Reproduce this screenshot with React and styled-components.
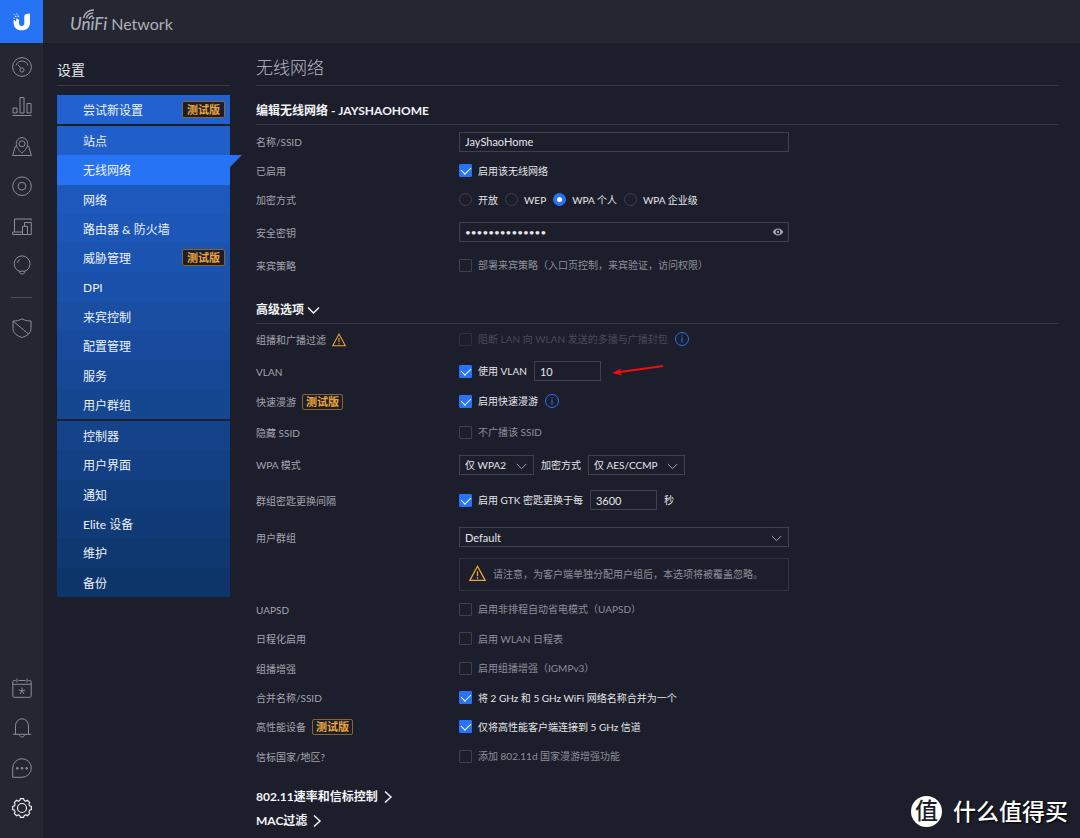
import React, { useState } from "react";
import styled, { createGlobalStyle, css } from "styled-components";

const color = {
  page: "#1c1e2b",
  bar: "#242631",
  rail: "#242632",
  line: "#363944",
  field: "#3e424c",
  blue: "#2673f6",
  amber: "#eda63a",
  text: "#e4e5e9",
  label: "#a3a5ad",
  muted: "#8d8f98",
};

const GlobalStyle = createGlobalStyle`
  * { box-sizing: border-box; }
  body {
    margin: 0;
    background: ${color.page};
    color: ${color.text};
    font-family: Lato, "Noto Sans CJK SC", sans-serif;
    font-size: 10px;
  }
  button, input, select { font-family: inherit; color: inherit; }
`;

const Page = styled.div`
  position: relative;
  display: flex;
  min-height: 100vh;
`;

/* ---------- left rail ---------- */

const Rail = styled.nav`
  display: flex;
  flex-direction: column;
  flex: none;
  width: 43px;
  padding-bottom: 10px;
  background: ${color.rail};
`;

const LogoLink = styled.a`
  display: grid;
  place-items: center;
  height: 43px;
  margin-bottom: 4px;
  background: ${color.blue};
`;

const RailButton = styled.button`
  display: grid;
  place-items: center;
  height: 40px;
  padding: 0;
  border: 0;
  background: none;
  color: ${(p) => (p.$active ? "#eceef2" : "#8b8e9a")};
`;

const RailDivider = styled.hr`
  width: 21px;
  height: 1px;
  margin: 10px auto;
  border: 0;
  background: #4d505c;
`;

const Spacer = styled.div`
  flex: 1;
`;

const Svg = styled.svg`
  display: block;
  flex: none;
  overflow: visible;
  fill: none;
  stroke: currentColor;
`;

const Icon20 = ({ children }) => (
  <Svg width="20" height="20" viewBox="0 0 20 20" strokeWidth="1" aria-hidden="true">
    {children}
  </Svg>
);

const GaugeIcon = () => (
  <Icon20>
    <circle cx="10" cy="10" r="9.4" />
    <path d="M4 8.4C5.3 5.4 7.3 4 10 4s4.700 1.400 6 4.400" />
    <circle cx="10" cy="13" r="2.100" />
    <path d="M8.700 11.200 6 7.700" />
  </Icon20>
);
const StatsIcon = () => (
  <Icon20>
    <path d="M.5 18.500h19M1 16v-5h4v5zM8 16V.5h4V16zM15 16V6.500h4V16z" />
  </Icon20>
);
const MapIcon = () => (
  <Icon20>
    <path d="M10 16.200C6 12.500 4.300 10 4.300 6.500a5.700 5.900 0 0 1 11.400 0c0 3.500-1.700 6-5.700 9.700z" />
    <circle cx="10" cy="6.800" r="3" />
    <path d="M4.600 9 3.200 9.500.7 18.500h18.600L16.800 9.500 15.400 9" />
  </Icon20>
);
const DeviceIcon = () => (
  <Icon20>
    <circle cx="10" cy="9.200" r="9.300" />
    <circle cx="10" cy="9.200" r="3.900" />
  </Icon20>
);
const ClientsIcon = () => (
  <Icon20>
    <path d="M19.200 3.500V2H2.500v13M10.500 15H.7v2.500h9.800M10.500 17.500V9.300h5v8.200zM12.500 9V5.500h6.800v12h-3.800" />
  </Icon20>
);
const BulbIcon = () => (
  <Icon20>
    <path d="M7.300 14.200C4 13 2.200 10 2.200 6.800a7.900 7.900 0 0 1 15.800 0c0 3.200-1.800 6.200-5.100 7.400M7.300 14.200h5.600v1.300l-1.400 1.300H8.700l-1.400-1.300zM5.300 5.700A5 5 0 0 1 8.200 2.400" />
  </Icon20>
);
const ShieldIcon = () => (
  <Icon20>
    <path d="M10 .8c2.800 1.700 5.700 2.200 9 2.200v7.500c0 4.500-4 7.500-9 9-5-1.500-9-4.500-9-9V3c3.300 0 6.200-.5 9-2.200zM1.500 3.500 16.500 16" />
  </Icon20>
);
const CalendarIcon = () => (
  <Icon20>
    <path d="M3.800 2.500H2.200C1.300 2.500.8 3 .8 3.800v14c0 .9.500 1.500 1.400 1.500h15.600c.9 0 1.400-.6 1.400-1.500v-14c0-.8-.5-1.300-1.400-1.300h-1.600M6.500 2.500h7M.8 6.300h18.400M5 .5v4M15 .5v4" />
    <path d="M10 9.500V13M6.700 12l3.300 1 3.300-1M8 16l2-3 2 3" />
  </Icon20>
);
const BellIcon = () => (
  <Icon20>
    <path d="M.9 16.300h18.200M3.500 16V7.800a6.500 7 0 0 1 13 0V16M7.500 17c.5 2.700 4.500 2.700 5 0" />
  </Icon20>
);
const ChatIcon = () => (
  <Icon20>
    <path d="M.7 19.300V10A9.300 9.300 0 1 1 10 19.300z" />
    <g fill="currentColor" stroke="none">
      <circle cx="5.300" cy="10.300" r="1.200" />
      <circle cx="10" cy="10.300" r="1.200" />
      <circle cx="14.700" cy="10.300" r="1.200" />
    </g>
  </Icon20>
);
const gearPath = (() => {
  const steps = [];
  for (let i = 0; i < 8; i++) {
    const at = (d, r) => {
      const a = ((i * 45 + d) * Math.PI) / 180;
      return `${(10 + r * Math.sin(a)).toFixed(2)} ${(10 - r * Math.cos(a)).toFixed(2)}`;
    };
    steps.push(`${i ? "L" : "M"}${at(-10, 9.5)}L${at(10, 9.5)}Q${at(13, 7.7)} ${at(22.5, 7.7)}Q${at(32, 7.7)} ${at(35, 9.5)}`);
  }
  return `${steps.join("")}z`;
})();
const GearIcon = () => (
  <Icon20>
    <path d={gearPath} strokeLinejoin="round" strokeWidth="1.2" />
    <circle cx="10" cy="10" r="4.500" strokeWidth="1.2" />
  </Icon20>
);

const LogoMark = () => (
  <svg width="18" height="18" viewBox="0 0 18 18" aria-hidden="true">
    <path
      fill="#fff"
      d="M11.300 3.500C11.300 1.500 13 .5 17 .5V9.500C17 14.500 13.800 17.300 8.800 17.300S.6 14.500.6 9.500V7H2v1.200h1.200V5.500h1.300v1H6V10c0 1.900.9 2.900 2.700 2.900s2.600-1 2.600-2.900z"
    />
    <path fill="#fff" d="M.8 1.200h.9v.9H.8zM3.400.5h1v1h-1zM2 2.800h1.300v1.300H2zM.6 4.700h1.100v1.100H.6zM4.600 2.600h1.200v1.300H4.600z" />
  </svg>
);

/* ---------- top bar ---------- */

const Body = styled.div`
  flex: 1;
  min-width: 0;
`;

const TopBar = styled.header`
  display: flex;
  align-items: center;
  height: 43px;
  padding: 4px 27px 0;
  background: ${color.bar};
  color: #adafb8;
  font-size: 16px;
  line-height: 20px;
`;

const Brand = styled.span`
  position: relative;
  margin-right: 4px;
  font-size: 17px;
  font-style: italic;
  font-weight: 500;
`;

const Waves = styled(Svg)`
  position: absolute;
  left: 13px;
  top: -5px;
`;

/* ---------- settings navigation ---------- */

const Columns = styled.div`
  display: flex;
  align-items: flex-start;
  gap: 26px;
  padding: 0 21px 4px 14px;
`;

const Aside = styled.aside`
  flex: none;
  width: 173px;
`;

const AsideTitle = styled.h2`
  margin: 0 0 9px;
  padding: 17px 0 5px;
  border-bottom: 1px solid ${color.line};
  font-size: 14px;
  font-weight: 400;
  line-height: 20px;
`;

const NavGroup = styled.ul`
  display: grid;
  grid-auto-rows: 1fr;
  height: ${(p) => p.$height}px;
  margin: 0 0 2px;
  padding: 0;
  list-style: none;
`;

const NavLink = styled.a`
  position: relative;
  display: flex;
  align-items: center;
  justify-content: space-between;
  height: 100%;
  padding: 0 5px 0 26px;
  background: ${(p) => p.$shade};
  color: #eef2fa;
  font-size: 12px;
  text-decoration: none;
  ${(p) =>
    p.$active &&
    css`
      background: ${color.blue};
      &::after {
        content: "";
        position: absolute;
        left: 100%;
        top: 0;
        border-top: 12px solid ${color.blue};
        border-right: 12px solid transparent;
      }
    `}
`;

const Badge = styled.span`
  flex: none;
  height: ${(p) => (p.$inline ? 16 : 17)}px;
  padding: 0 ${(p) => (p.$inline ? 3 : 4)}px;
  border: 1px solid #8a652f;
  border-radius: 2px;
  background: ${color.page};
  color: ${color.amber};
  font-size: 11px;
  font-weight: 700;
  line-height: ${(p) => (p.$inline ? 14 : 15)}px;
`;

const groups = [
  { height: 29, items: [["尝试新设置", true]] },
  {
    height: 293,
    items: [["站点"], ["无线网络"], ["网络"], ["路由器 & 防火墙"], ["威胁管理", true], ["DPI"], ["来宾控制"], ["配置管理"], ["服务"], ["用户群组"]],
  },
  { height: 176, items: [["控制器"], ["用户界面"], ["通知"], ["Elite 设备"], ["维护"], ["备份"]] },
];

const shadeAt = (i) => {
  const t = i / 16;
  const mix = (a, b) => Math.round(a + (b - a) * t);
  return `rgb(${mix(33, 14)}, ${mix(97, 53)}, ${mix(208, 106)})`;
};

/* ---------- form ---------- */

const Main = styled.main`
  flex: 1;
  min-width: 0;
`;

const Title = styled.h1`
  margin: 0;
  padding: 13px 0 5px;
  border-bottom: 1px solid ${color.line};
  color: #b9bbc2;
  font-size: 17px;
  font-weight: 300;
  line-height: 24px;
`;

const headingText = css`
  color: #f2f3f5;
  font-size: 12px;
  font-weight: 700;
  line-height: 18px;
`;

const Heading = styled.h2`
  ${headingText}
  margin: 0 0 2px;
  padding: 16px 0 4px;
  border-bottom: 1px solid ${color.line};
`;

const Toggle = styled.button`
  ${headingText}
  display: flex;
  align-items: center;
  gap: 3px;
  width: 100%;
  padding: 0;
  border: 0;
  background: none;
  text-align: left;
`;

const AdvancedToggle = styled(Toggle)`
  margin-top: 21px;
  padding-bottom: 4px;
  border-bottom: 1px solid ${color.line};
`;

const More = styled.div`
  display: grid;
  gap: 6px;
  padding-top: 17px;
`;

const Row = styled.div`
  display: grid;
  grid-template-columns: 203px 1fr;
  align-items: center;
  min-height: ${(p) => p.$height || 29}px;
`;

const Label = styled.div`
  display: flex;
  align-items: center;
  gap: 6px;
  padding-top: 1px;
  color: ${color.label};
  line-height: 16px;
`;

const Controls = styled.div`
  display: flex;
  align-items: center;
  gap: 7px;
  line-height: 16px;
`;

const Choice = styled.label`
  display: flex;
  align-items: center;
  gap: 6px;
  color: ${(p) => (p.$dim ? "#484b56" : p.$on ? color.text : color.muted)};
  input { opacity: ${(p) => (p.$dim ? 0.5 : 1)}; }
`;

const tick = css`
  appearance: none;
  position: relative;
  flex: none;
  width: 13px;
  height: 13px;
  margin: 0;
  border: 1px solid ${color.field};
  &:checked { background: ${color.blue}; border-color: ${color.blue}; }
`;

const CheckBox = styled.input.attrs({ type: "checkbox" })`
  ${tick}
  border-radius: 1px;
  &:checked::after {
    content: "";
    position: absolute;
    left: 3px;
    top: 0;
    width: 5px;
    height: 8px;
    border: solid #fff;
    border-width: 0 1px 1px 0;
    transform: rotate(45deg);
  }
`;

const RadioButton = styled.input.attrs({ type: "radio" })`
  ${tick}
  border-radius: 50%;
  &:checked::after {
    content: "";
    position: absolute;
    left: 3px;
    top: 3px;
    width: 5px;
    height: 5px;
    border-radius: 50%;
    background: #fff;
  }
`;

const TextInput = styled.input`
  width: ${(p) => (p.$wide ? "330px" : "67px")};
  height: 20px;
  padding: 0 5px;
  border: 1px solid ${color.field};
  border-radius: 0;
  background: transparent;
  font-size: ${(p) => (p.type === "password" ? 10 : 11)}px;
`;

const FieldBox = styled.div`
  position: relative;
  width: ${(p) => p.$width}px;
`;

const Select = styled.select`
  appearance: none;
  display: block;
  width: 100%;
  height: 20px;
  padding: 0 5px;
  border: 1px solid ${color.field};
  border-radius: 0;
  background: ${color.page};
  font-size: ${(p) => (p.$large ? 11 : 10)}px;
`;

const SelectArrow = styled(Svg)`
  position: absolute;
  right: 7px;
  top: 8px;
  color: #a3a5ad;
  pointer-events: none;
`;

const EyeButton = styled.button`
  position: absolute;
  right: 5px;
  top: 6px;
  padding: 0;
  border: 0;
  background: none;
  color: #a9abb3;
`;

const Notice = styled.p`
  display: flex;
  align-items: center;
  gap: 7px;
  max-width: 330px;
  min-height: 33px;
  margin: 5px 0 3px 203px;
  padding: 0 9px 2px;
  border: 1px solid #30333e;
  color: ${color.muted};
  line-height: 16px;
`;

const Chevron = ({ right }) => (
  <Svg width="13" height="13" viewBox="0 0 13 13" strokeWidth="1.500" aria-hidden="true">
    <path d={right ? "M4 .5l6 5.500L4 11.500" : "M1 3.500l5.500 5.500L12 3.500"} />
  </Svg>
);

const Warning = ({ size = 14 }) => (
  <Svg width={size} height={size} viewBox="0 0 16 16" strokeWidth="1.200" color={color.amber} aria-hidden="true">
    <path d="M8 1.200 15.200 14.500H.8zM8 5.800v4.700M8 11.600v1.300" />
  </Svg>
);

const Info = () => (
  <Svg width="14" height="14" viewBox="0 0 14 14" strokeWidth="1" color={color.blue} aria-hidden="true">
    <circle cx="7" cy="7" r="6.500" />
    <path d="M7 5.500v5M7 3.500v1.200" />
  </Svg>
);

const Arrow = styled.svg`
  margin-left: 4px;
`;

const Check = ({ children, on = false, dim = false }) => {
  const [checked, setChecked] = useState(on);
  return (
    <Choice $on={checked} $dim={dim}>
      <CheckBox checked={checked} disabled={dim} onChange={() => setChecked(!checked)} />
      {children}
    </Choice>
  );
};

const Dropdown = ({ width, value, label, large }) => (
  <FieldBox $width={width}>
    <Select aria-label={label} defaultValue={value} $large={large}>
      <option>{value}</option>
    </Select>
    <SelectArrow width="11" height="7" viewBox="0 0 11 7" strokeWidth="1" aria-hidden="true">
      <path d="M.8 1l4.700 4.700L10.200 1" />
    </SelectArrow>
  </FieldBox>
);

const Field = ({ label, extra, height, htmlFor, children }) => (
  <Row $height={height}>
    <Label>
      {htmlFor ? <label htmlFor={htmlFor}>{label}</label> : <span>{label}</span>}
      {extra}
    </Label>
    <Controls>{children}</Controls>
  </Row>
);

/* ---------- site mark ---------- */

const SiteMark = styled.div`
  position: absolute;
  right: 12px;
  bottom: 11px;
  display: flex;
  align-items: center;
  gap: 11px;
  color: #fff;
  font-size: 23px;
  font-weight: 500;
  line-height: 31px;
  text-shadow: 1px 1px 2px #000;
`;

const SiteDisc = styled.span`
  width: 31px;
  height: 31px;
  border-radius: 50%;
  background: #fff;
  color: #1c1e2b;
  font-weight: 500;
  line-height: 29px;
  text-align: center;
  text-shadow: none;
`;

export default function App() {
  const [mode, setMode] = useState("WPA 个人");
  let index = 0;
  return (
    <Page>
      <GlobalStyle />
      <Rail aria-label="主导航">
        <LogoLink href="#" aria-label="Ubiquiti"><LogoMark /></LogoLink>
        <RailButton aria-label="仪表板"><GaugeIcon /></RailButton>
        <RailButton aria-label="统计"><StatsIcon /></RailButton>
        <RailButton aria-label="地图"><MapIcon /></RailButton>
        <RailButton aria-label="设备"><DeviceIcon /></RailButton>
        <RailButton aria-label="客户端"><ClientsIcon /></RailButton>
        <RailButton aria-label="洞察"><BulbIcon /></RailButton>
        <RailDivider />
        <RailButton aria-label="安全"><ShieldIcon /></RailButton>
        <Spacer />
        <RailButton aria-label="事件"><CalendarIcon /></RailButton>
        <RailButton aria-label="警报"><BellIcon /></RailButton>
        <RailButton aria-label="聊天"><ChatIcon /></RailButton>
        <RailButton aria-label="设置" $active><GearIcon /></RailButton>
      </Rail>
      <Body>
        <TopBar>
          <Brand>
            UniFi
            <Waves width="14" height="12" viewBox="0 0 14 12" strokeWidth="1.500" aria-hidden="true">
              <path d="M.5 9C2 3.500 5.500 1 11 1M3.200 9.500c1-3.600 3.500-5.500 7-5.500M6 10c.5-1.900 1.900-3 3.900-3" />
            </Waves>
          </Brand>
          <span>Network</span>
        </TopBar>
        <Columns>
          <Aside>
            <AsideTitle>设置</AsideTitle>
            {groups.map((group) => (
              <NavGroup key={group.height} $height={group.height}>
                {group.items.map(([name, beta]) => (
                  <li key={name}>
                    <NavLink href="#" $shade={shadeAt(index++)} $active={name === "无线网络"}>
                      {name}
                      {beta && <Badge>测试版</Badge>}
                    </NavLink>
                  </li>
                ))}
              </NavGroup>
            ))}
          </Aside>
          <Main>
            <Title>无线网络</Title>
            <Heading>编辑无线网络 - JAYSHAOHOME</Heading>
            <Field label="名称/SSID" htmlFor="ssid">
              <TextInput id="ssid" $wide defaultValue="JayShaoHome" />
            </Field>
            <Field label="已启用"><Check on>启用该无线网络</Check></Field>
            <Field label="加密方式">
              {["开放", "WEP", "WPA 个人", "WPA 企业级"].map((name) => (
                <Choice key={name} $on>
                  <RadioButton name="security" checked={mode === name} onChange={() => setMode(name)} />
                  {name}
                </Choice>
              ))}
            </Field>
            <Field label="安全密钥" htmlFor="key" height={36}>
              <FieldBox $width={330}>
                <TextInput id="key" type="password" $wide defaultValue="abcdefghijklmn" />
                <EyeButton aria-label="显示密钥">
                  <Svg width="12" height="8" viewBox="0 0 12 8" aria-hidden="true">
                    <path d="M.8 4C3-.6 9-.6 11.200 4 9 8.600 3 8.600.8 4z" fill="currentColor" stroke="none" />
                    <circle cx="6" cy="4" r="1.800" stroke={color.page} strokeWidth="1.300" />
                  </Svg>
                </EyeButton>
              </FieldBox>
            </Field>
            <Field label="来宾策略" height={30}>
              <Check>部署来宾策略（入口页控制，来宾验证，访问权限）</Check>
            </Field>

            <AdvancedToggle aria-expanded="true">高级选项<Chevron /></AdvancedToggle>
            <Field label="组播和广播过滤" extra={<Warning />} height={30}>
              <Check dim>阻断 LAN 向 WLAN 发送的多播与广播封包</Check>
              <Info />
            </Field>
            <Field label="VLAN" htmlFor="vlan" height={34}>
              <Check on>使用 VLAN</Check>
              <TextInput id="vlan" defaultValue="10" />
              <Arrow width="52" height="12" viewBox="0 0 52 12" aria-hidden="true">
                <path d="M51 1 8 7" stroke="#f20d0d" strokeWidth="2" fill="none" />
                <path d="M0 8 9 3.500 7.800 7 10 10.500z" fill="#f20d0d" />
              </Arrow>
            </Field>
            <Field label="快速漫游" extra={<Badge $inline>测试版</Badge>} height={26}>
              <Check on>启用快速漫游</Check>
              <Info />
            </Field>
            <Field label="隐藏 SSID" height={36}><Check>不广播该 SSID</Check></Field>
            <Field label="WPA 模式">
              <Dropdown width={75} value="仅 WPA2" label="WPA 模式" />
              <span>加密方式</span>
              <Dropdown width={97} value="仅 AES/CCMP" label="加密方式" />
            </Field>
            <Field label="群组密匙更换间隔" htmlFor="gtk" height={42}>
              <Check on>启用 GTK 密匙更换于每</Check>
              <TextInput id="gtk" defaultValue="3600" />
              <span>秒</span>
            </Field>
            <Field label="用户群组" height={32}>
              <Dropdown width={330} value="Default" label="用户群组" large />
            </Field>
            <Notice><Warning size={17} />请注意，为客户端单独分配用户组后，本选项将被覆盖忽略。</Notice>
            <Field label="UAPSD" height={30}><Check>启用非排程自动省电模式（UAPSD）</Check></Field>
            <Field label="日程化启用"><Check>启用 WLAN 日程表</Check></Field>
            <Field label="组播增强" height={30}><Check>启用组播增强（IGMPv3）</Check></Field>
            <Field label="合并名称/SSID">
              <Check on>将 2 GHz 和 5 GHz WiFi 网络名称合并为一个</Check>
            </Field>
            <Field label="高性能设备" extra={<Badge $inline>测试版</Badge>}>
              <Check on>仅将高性能客户端连接到 5 GHz 信道</Check>
            </Field>
            <Field label="信标国家/地区?" height={30}><Check>添加 802.11d 国家漫游增强功能</Check></Field>
            <More>
              <Toggle aria-expanded="false">802.11速率和信标控制<Chevron right /></Toggle>
              <Toggle aria-expanded="false">MAC过滤<Chevron right /></Toggle>
            </More>
          </Main>
        </Columns>
      </Body>
      <SiteMark>
        <SiteDisc>值</SiteDisc>
        <span>什么值得买</span>
      </SiteMark>
    </Page>
  );
}
